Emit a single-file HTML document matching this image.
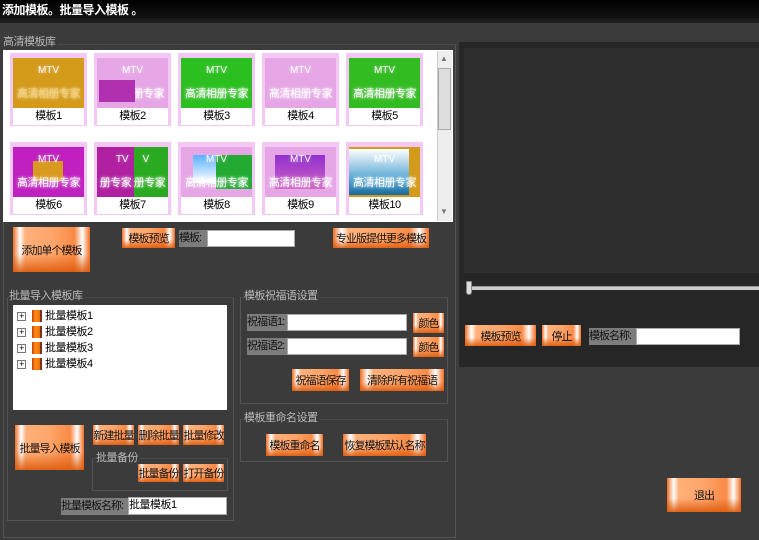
<!DOCTYPE html>
<html><head><meta charset="utf-8"><style>
*{margin:0;padding:0;box-sizing:border-box}
body{width:759px;height:540px;overflow:hidden;background:#3b3b3b;font-family:"Liberation Sans","Noto Sans CJK SC","WenQuanYi Zen Hei",sans-serif;font-size:11px;color:#000;position:relative}
.a{position:absolute}
.title{left:0;top:0;width:759px;height:23px;background:linear-gradient(#000,#111 70%,#222);color:#fff;font-weight:bold;font-size:12px;line-height:21px;padding-left:2px;letter-spacing:-0.5px}
.grp{position:absolute;border:1px solid #555;border-top-color:#4a4a4a}
.lbl{position:absolute;color:#bbb;font-size:11px;background:#3b3b3b;line-height:14px;padding-right:2px;letter-spacing:-0.5px}
.btn{position:absolute;background:linear-gradient(180deg,rgba(255,255,255,0) 60%,rgba(220,90,10,.9) 100%),linear-gradient(90deg,#f36d20 0%,#fff 9%,#ffb07a 16%,#ffa56a 50%,#f98a45 80%,#fff 90%,#f36d20 100%);color:#111;text-align:center;font-size:11px;letter-spacing:-1px;display:flex;align-items:center;justify-content:center;white-space:nowrap;overflow:hidden}
.inp{position:absolute;background:#fff;border:1px solid #aaa}
.glab{position:absolute;background:#7d7d7d;color:#111;font-size:11px;letter-spacing:-1px;line-height:17px;white-space:nowrap;overflow:hidden}
.tile{position:absolute;width:77px;height:73px;background:#f4c8f4;padding:5px 3px 0 3px}
.img{width:71px;height:50px;position:relative;overflow:hidden;text-align:center;color:#fff}
.img .m{font-size:10px;margin-top:7px;text-shadow:0 0 3px #fff8}
.img .t{font-size:11px;margin-top:9px;white-space:nowrap;text-shadow:0 0 3px #fff;letter-spacing:-0.5px}
.cap{height:17px;background:#fff;text-align:center;font-size:11px;line-height:17px;letter-spacing:-0.5px}
.tree div{height:16px;line-height:16px;font-size:11px;position:relative;padding-left:32px;letter-spacing:-0.5px}
.tree div i{position:absolute;left:4px;top:4px;width:9px;height:9px;border:1px solid #777;font-style:normal;font-size:9px;line-height:7px;text-align:center;background:#fff}
.tree div b{position:absolute;left:19px;top:2px;width:10px;height:12px;background:linear-gradient(90deg,#c04000,#ff8a1a 40%,#f07000);border-right:2px solid #732}
</style></head><body>
<div class="a title">添加模板。批量导入模板 。</div>

<div class="grp" style="left:3px;top:44px;width:453px;height:494px"></div>
<div class="lbl" style="left:3px;top:35px">高清模板库</div>

<div class="a" style="left:3px;top:50px;width:450px;height:172px;background:#fff"></div>
<div class="a" style="left:437px;top:51px;width:15px;height:170px;background:#eee;border-left:1px solid #ccc"></div>
<div class="a" style="left:438px;top:68px;width:13px;height:62px;background:#ddd;border:1px solid #aaa"></div>
<div class="a" style="left:440px;top:54px;font-size:8px;color:#777">▲</div>
<div class="a" style="left:440px;top:207px;font-size:8px;color:#777">▼</div>

<div class="tile" style="left:10px;top:53px"><div class="img" style="background:#d49a1a"><div class="m">MTV</div><div class="t" style="color:#f7d070">高清相册专家</div></div><div class="cap">模板1</div></div>
<div class="tile" style="left:94px;top:53px"><div class="img" style="background:#e6a6e6"><div class="m">MTV</div><div class="t">高清相册专家</div><div class="a" style="left:2px;top:22px;width:36px;height:22px;background:#b030b0"></div></div><div class="cap">模板2</div></div>
<div class="tile" style="left:178px;top:53px"><div class="img" style="background:#2bbf20"><div class="m">MTV</div><div class="t">高清相册专家</div></div><div class="cap">模板3</div></div>
<div class="tile" style="left:262px;top:53px"><div class="img" style="background:#e6a6e6"><div class="m">MTV</div><div class="t">高清相册专家</div></div><div class="cap">模板4</div></div>
<div class="tile" style="left:346px;top:53px"><div class="img" style="background:#33bb22"><div class="m">MTV</div><div class="t">高清相册专家</div></div><div class="cap">模板5</div></div>

<div class="tile" style="left:10px;top:142px"><div class="img" style="background:#c020c0"><div class="a" style="left:20px;top:14px;width:30px;height:20px;background:#d99a20"></div><div class="m" style="position:relative">MTV</div><div class="t" style="position:relative">高清相册专家</div></div><div class="cap">模板6</div></div>
<div class="tile" style="left:94px;top:142px"><div class="img" style="background:#2aaa20"><div class="a" style="left:0;top:0;width:37px;height:50px;background:#b020a0"></div><div class="m" style="position:relative">TV&nbsp;&nbsp;&nbsp;&nbsp;&nbsp;V</div><div class="t" style="position:relative">册专家 册专家</div></div><div class="cap">模板7</div></div>
<div class="tile" style="left:178px;top:142px"><div class="img" style="background:#e6a6e6"><div class="a" style="left:12px;top:8px;width:40px;height:28px;background:linear-gradient(#5ab0ff,#fff)"></div><div class="a" style="left:35px;top:8px;width:36px;height:34px;background:#22aa33"></div><div class="m" style="position:relative">MTV</div><div class="t" style="position:relative">高清相册专家</div></div><div class="cap">模板8</div></div>
<div class="tile" style="left:262px;top:142px"><div class="img" style="background:#e6a6e6"><div class="a" style="left:10px;top:8px;width:50px;height:34px;background:linear-gradient(#9030d0,#d060c0)"></div><div class="m" style="position:relative">MTV</div><div class="t" style="position:relative">高清相册专家</div></div><div class="cap">模板9</div></div>
<div class="tile" style="left:346px;top:142px"><div class="img" style="background:#d49a1a"><div class="a" style="left:0;top:2px;width:60px;height:46px;background:linear-gradient(#fff,#4aa0d0 70%,#1a6a9a)"></div><div class="m" style="position:relative">MTV</div><div class="t" style="position:relative">高清相册专家</div></div><div class="cap">模板10</div></div>

<div class="btn" style="left:13px;top:227px;width:77px;height:45px">添加单个模板</div>
<div class="btn" style="left:122px;top:228px;width:53px;height:20px">模板预览</div>
<div class="glab" style="left:179px;top:230px;width:28px">模板:</div>
<div class="inp" style="left:207px;top:230px;width:88px;height:17px"></div>
<div class="btn" style="left:333px;top:228px;width:96px;height:20px">专业版提供更多模板</div>

<div class="grp" style="left:7px;top:297px;width:227px;height:224px"></div>
<div class="lbl" style="left:9px;top:289px">批量导入模板库</div>
<div class="a tree" style="left:13px;top:305px;width:214px;height:105px;background:#fff;padding-top:3px">
<div><i>+</i><b></b>批量模板1</div><div><i>+</i><b></b>批量模板2</div><div><i>+</i><b></b>批量模板3</div><div><i>+</i><b></b>批量模板4</div>
</div>
<div class="btn" style="left:15px;top:425px;width:69px;height:45px">批量导入模板</div>
<div class="btn" style="left:93px;top:425px;width:41px;height:20px">新建批量</div>
<div class="btn" style="left:138px;top:425px;width:41px;height:20px">删除批量</div>
<div class="btn" style="left:183px;top:425px;width:41px;height:20px">批量修改</div>
<div class="grp" style="left:92px;top:458px;width:136px;height:33px"></div>
<div class="lbl" style="left:96px;top:451px">批量备份</div>
<div class="btn" style="left:138px;top:464px;width:41px;height:18px">批量备份</div>
<div class="btn" style="left:183px;top:464px;width:41px;height:18px">打开备份</div>
<div class="glab" style="left:61px;top:498px;width:67px">批量模板名称:</div>
<div class="inp" style="left:128px;top:497px;width:99px;height:18px;line-height:15px;font-size:11px;letter-spacing:-0.5px">批量模板1</div>

<div class="grp" style="left:240px;top:297px;width:208px;height:107px"></div>
<div class="lbl" style="left:244px;top:289px">模板祝福语设置</div>
<div class="glab" style="left:247px;top:314px;width:40px">祝福语1:</div>
<div class="inp" style="left:287px;top:314px;width:120px;height:17px"></div>
<div class="btn" style="left:413px;top:313px;width:31px;height:20px">颜色</div>
<div class="glab" style="left:247px;top:338px;width:40px">祝福语2:</div>
<div class="inp" style="left:287px;top:338px;width:120px;height:17px"></div>
<div class="btn" style="left:413px;top:337px;width:31px;height:20px">颜色</div>
<div class="btn" style="left:292px;top:369px;width:57px;height:22px">祝福语保存</div>
<div class="btn" style="left:360px;top:369px;width:84px;height:22px">清除所有祝福语</div>

<div class="grp" style="left:240px;top:419px;width:208px;height:43px"></div>
<div class="lbl" style="left:244px;top:411px">模板重命名设置</div>
<div class="btn" style="left:266px;top:434px;width:57px;height:22px">模板重命名</div>
<div class="btn" style="left:343px;top:434px;width:83px;height:22px">恢复模板默认名称</div>

<div class="a" style="left:459px;top:42px;width:300px;height:325px;background:#262626"></div>
<div class="a" style="left:464px;top:48px;width:295px;height:225px;background:#2e2e2e"></div>
<div class="a" style="left:468px;top:286px;width:291px;height:4px;background:#ccc;border-top:1px solid #999"></div>
<div class="a" style="left:466px;top:281px;width:6px;height:14px;background:#ddd;border:1px solid #888;border-radius:1px 1px 3px 3px"></div>
<div class="btn" style="left:465px;top:325px;width:71px;height:21px">模板预览</div>
<div class="btn" style="left:542px;top:325px;width:39px;height:21px">停止</div>
<div class="glab" style="left:589px;top:328px;width:47px">模板名称:</div>
<div class="inp" style="left:636px;top:328px;width:104px;height:17px"></div>

<div class="btn" style="left:667px;top:478px;width:74px;height:34px">退出</div>
</body></html>
